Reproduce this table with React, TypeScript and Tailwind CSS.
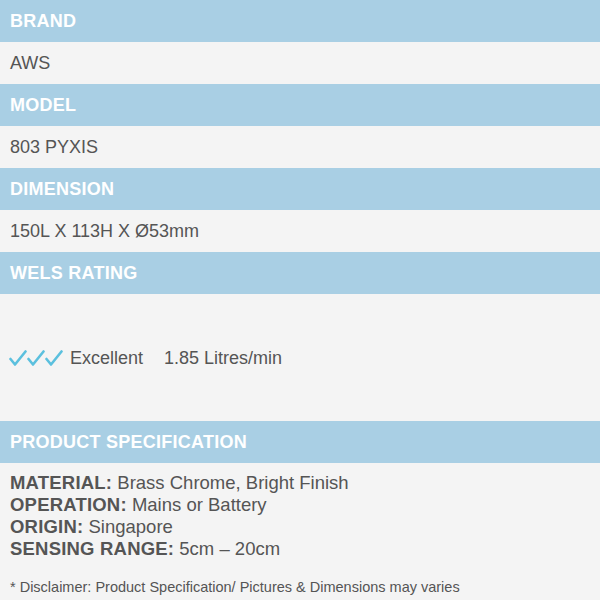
const font = { fontFamily: '"Liberation Sans", Arial, sans-serif' };

function Bar({ label }: { label: string }) {
  return (
    <div className="h-[42px] bg-[#a9cfe4] flex items-center px-[10px] text-white font-bold text-[18px] tracking-[0.25px]">
      {label}
    </div>
  );
}

function Value({ text }: { text: string }) {
  return (
    <div className="h-[42px] bg-[#f4f4f4] flex items-center px-[10px] text-[#555] text-[18px]">
      {text}
    </div>
  );
}

function Check() {
  return (
    <svg width="18" height="18" viewBox="0 0 18 18" className="shrink-0">
      <path d="M1.5 10 L6 15.5 L16.5 2.5" fill="none" stroke="#5bc0de" strokeWidth="2.6" strokeLinecap="round" strokeLinejoin="round" />
    </svg>
  );
}

function Spec({ label, value }: { label: string; value: string }) {
  return (
    <div>
      <b className="tracking-[0.2px]">{label}</b> {value}
    </div>
  );
}

export default function App() {
  return (
    <div className="w-[600px] h-[600px] bg-[#f4f4f4] overflow-hidden" style={font}>
      <Bar label="BRAND" />
      <Value text="AWS" />
      <Bar label="MODEL" />
      <Value text="803 PYXIS" />
      <Bar label="DIMENSION" />
      <Value text="150L X 113H X Ø53mm" />
      <Bar label="WELS RATING" />
      <div className="h-[127px] flex items-center px-[9px] text-[#555] text-[18px] pt-[1px]">
        <div className="flex mr-[7px]">
          <Check />
          <Check />
          <Check />
        </div>
        <span>Excellent</span>
        <span className="ml-[21px]">1.85 Litres/min</span>
      </div>
      <Bar label="PRODUCT SPECIFICATION" />
      <div className="px-[10px] pt-[9px] text-[#555] text-[18.5px] leading-[22px]">
        <Spec label="MATERIAL:" value="Brass Chrome, Bright Finish" />
        <Spec label="OPERATION:" value="Mains or Battery" />
        <Spec label="ORIGIN:" value="Singapore" />
        <Spec label="SENSING RANGE:" value="5cm – 20cm" />
        <div className="mt-[18px] text-[14.5px] leading-[18px]">* Disclaimer: Product Specification/ Pictures &amp; Dimensions may varies</div>
      </div>
    </div>
  );
}
